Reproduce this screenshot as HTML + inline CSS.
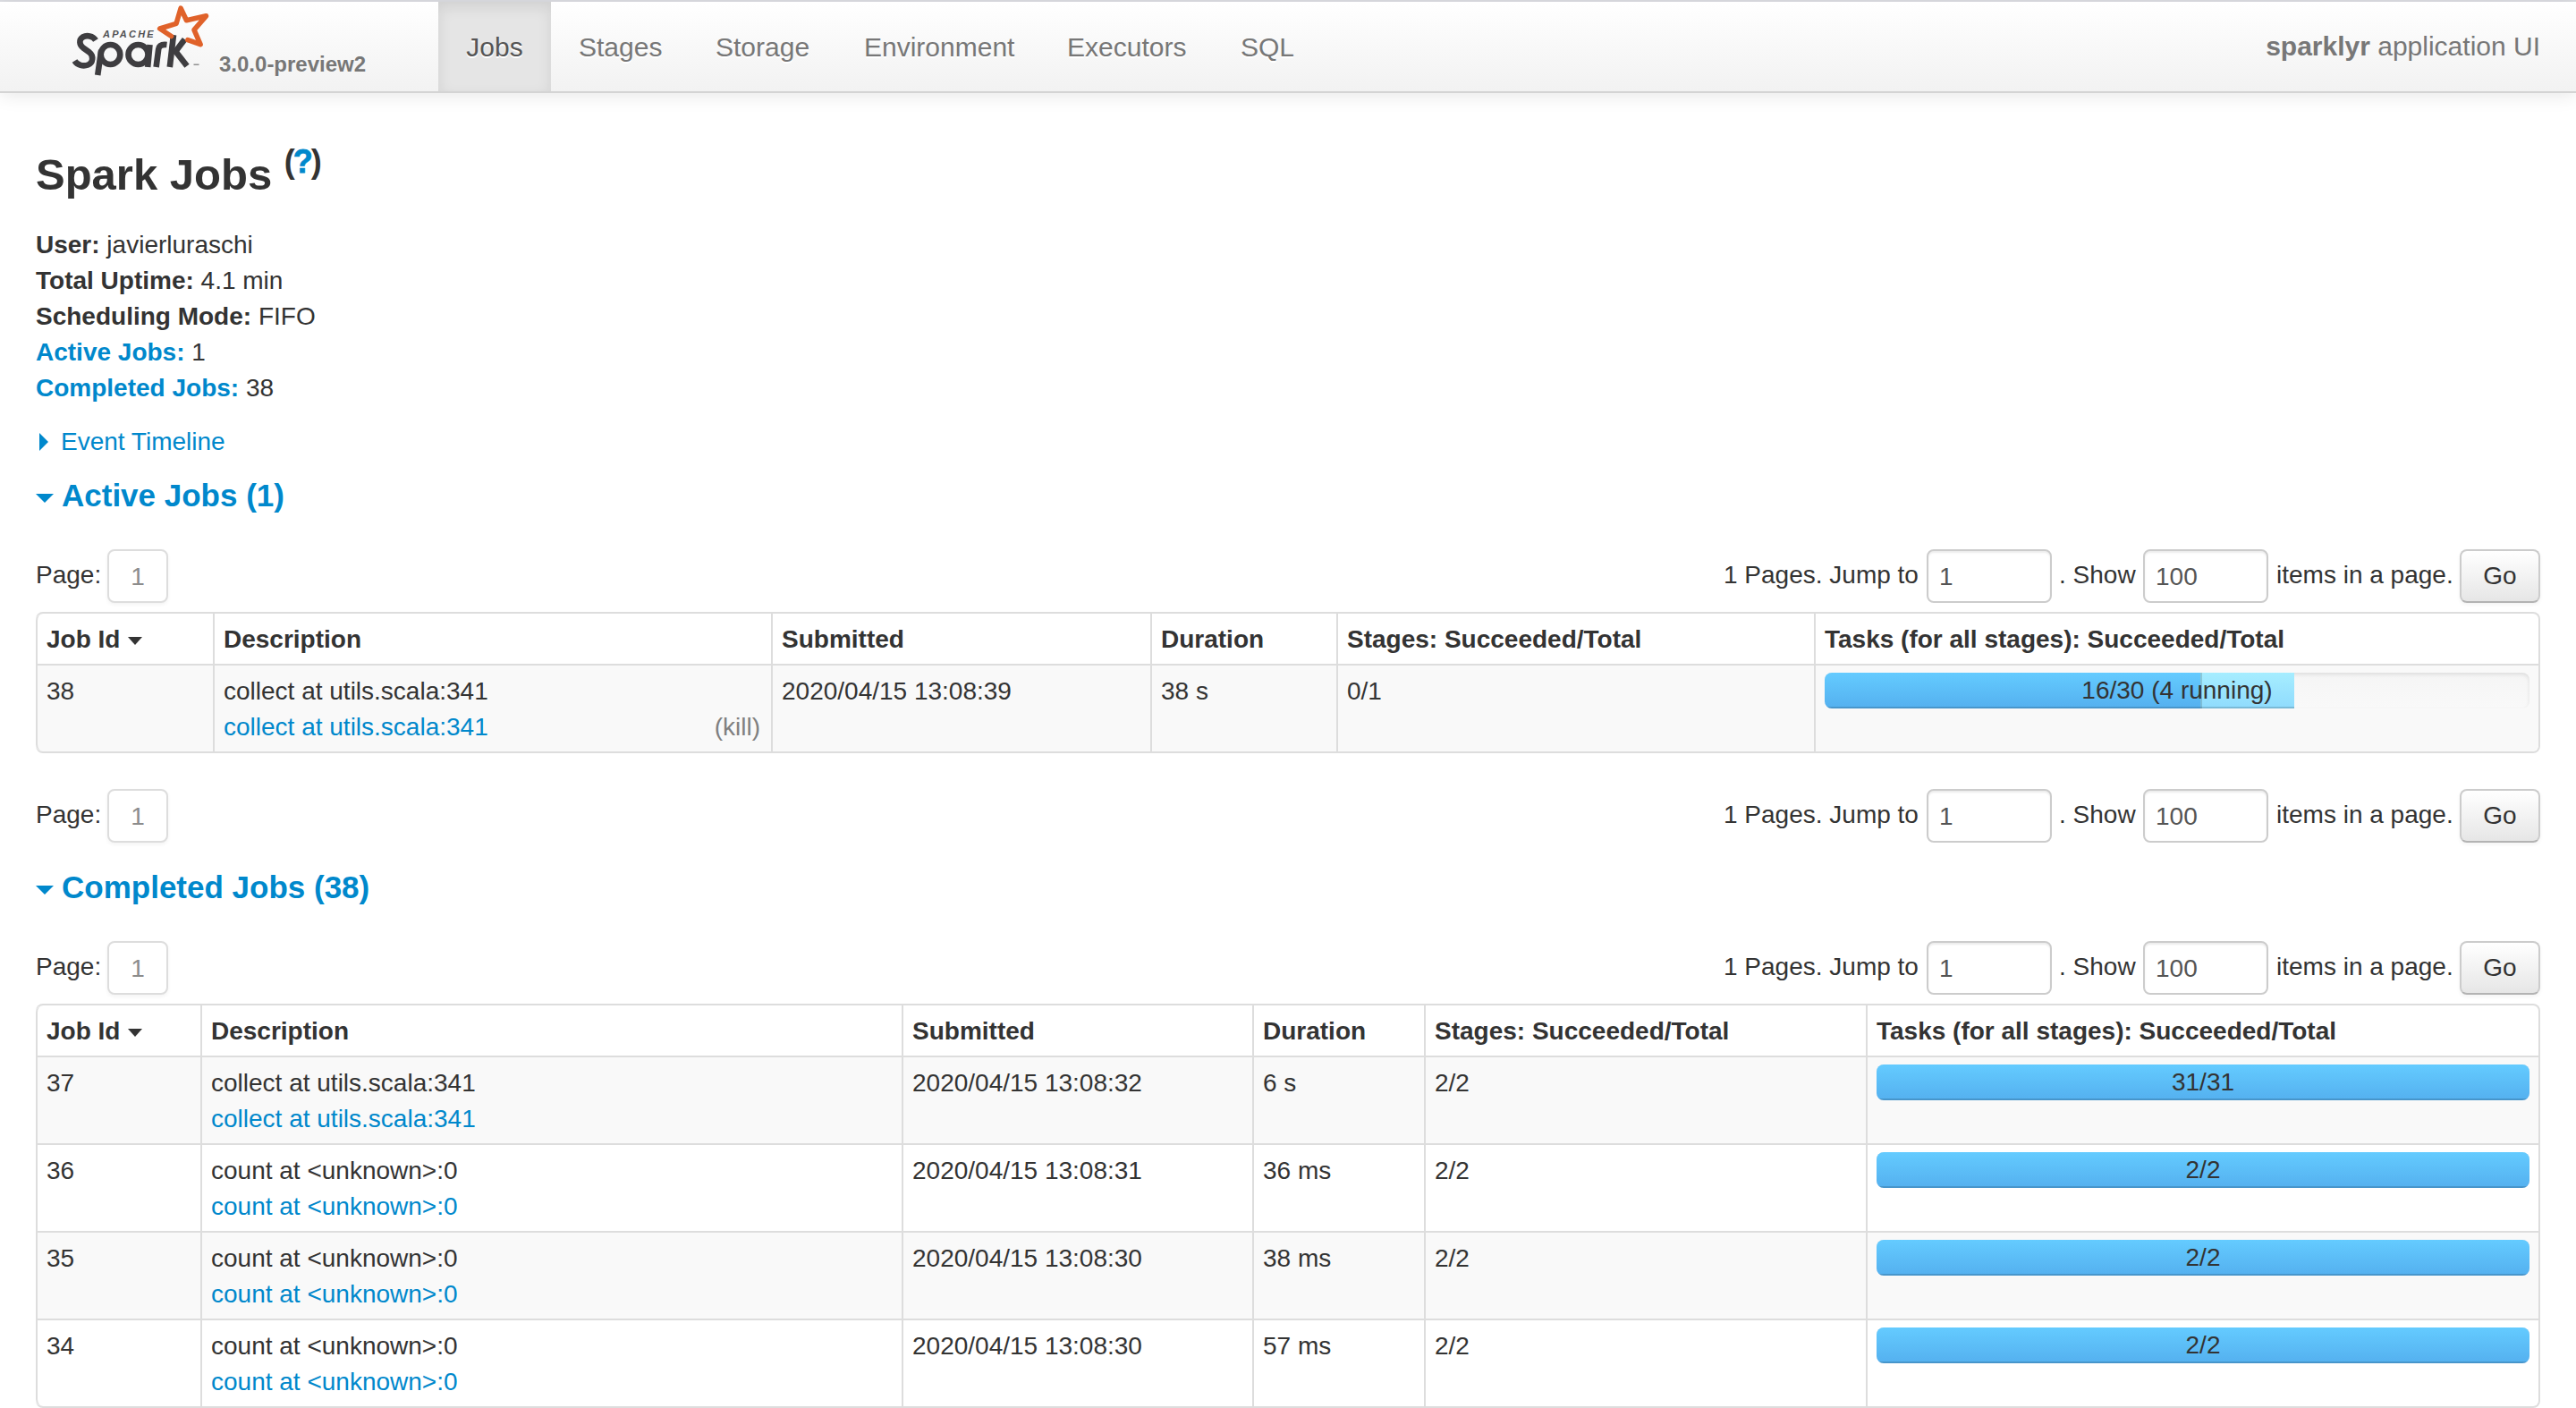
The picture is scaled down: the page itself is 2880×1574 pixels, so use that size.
<!DOCTYPE html>
<html>
<head>
<meta charset="utf-8">
<style>
* { box-sizing: border-box; }
html, body { margin: 0; padding: 0; }
body {
  position: relative;
  width: 2880px; height: 1574px; overflow: hidden;
  background: #fff;
  font-family: "Liberation Sans", sans-serif;
  font-size: 28px; line-height: 40px; color: #333;
}
a { color: #0088cc; text-decoration: none; }
.abs { position: absolute; white-space: nowrap; }
.topline { position: absolute; left: 0; top: 0; width: 2880px; height: 2px; background: #dddee3; }
.navbar {
  position: absolute; left: 0; top: 2px; width: 2880px; height: 102px;
  background: linear-gradient(to bottom, #ffffff, #f2f2f2);
  border-bottom: 2px solid #d4d4d4;
  box-shadow: 0 2px 20px rgba(0,0,0,0.1);
}
.logo { position: absolute; left: 0; top: -2px; }
.version { position: absolute; left: 245px; top: 50px; font-size: 24px; line-height: 40px; font-weight: bold; color: #777; }
.nav a { position: absolute; top: 0; height: 100px; padding: 0 30px; line-height: 101px; color: #777; font-size: 30px; text-shadow: 0 2px 0 #fff; white-space: nowrap; }
.nav a.active { background: #e5e5e5; color: #555; box-shadow: inset 0 6px 16px rgba(0,0,0,0.09); }
.apptext { position: absolute; right: 40px; top: 1px; line-height: 98px; font-size: 30px; color: #777; white-space: nowrap; }

h3 { position: absolute; left: 40px; top: 155px; margin: 0; font-size: 49px; line-height: 80px; font-weight: bold; white-space: nowrap; }
h3 sup { font-size: 36px; line-height: 0; vertical-align: baseline; position: relative; top: -19px; letter-spacing: -2px; }
h3 sup a { -webkit-text-stroke: 0.8px #0088cc; }
.info { position: absolute; left: 40px; top: 254px; }
.info div { height: 40px; white-space: nowrap; }
.info a b { color: #0088cc; }

.arrow-closed { position: absolute; width: 0; height: 0; border-top: 10px solid transparent; border-bottom: 10px solid transparent; border-left: 10px solid #08c; }
.arrow-open { position: absolute; width: 0; height: 0; border-left: 10px solid transparent; border-right: 10px solid transparent; border-top: 10px solid #08c; }
h4 { position: absolute; margin: 0; font-size: 35px; line-height: 40px; font-weight: bold; color: #0088cc; white-space: nowrap; }

.pglabel { position: absolute; left: 40px; }
.pgbox { position: absolute; left: 120px; width: 68px; height: 60px; border: 2px solid #ddd; border-radius: 8px; background: #fff; color: #8c8c8c; text-align: center; line-height: 57px; box-shadow: 0 2px 4px rgba(0,0,0,0.05); }
.form { position: absolute; left: 0; width: 2880px; height: 60px; }
.form .lbl { position: absolute; top: -1px; line-height: 60px; white-space: nowrap; }
.form .inp { position: absolute; top: 0; height: 60px; width: 140px; border: 2px solid #ccc; border-radius: 8px; background: #fff; color: #555; padding: 0 12px; line-height: 58px; box-shadow: inset 0 2px 2px rgba(0,0,0,0.075); }
.form .btn { position: absolute; top: 0; left: 2750px; width: 90px; height: 60px; border: 2px solid #ccc; border-bottom-color: #b3b3b3; border-radius: 8px; background: linear-gradient(to bottom, #ffffff, #e6e6e6); text-align: center; line-height: 56px; color: #333; box-shadow: inset 0 2px 0 rgba(255,255,255,.2), 0 2px 4px rgba(0,0,0,.05); }

table.tbl { position: absolute; left: 40px; width: 2800px; border-collapse: separate; border-spacing: 0; table-layout: fixed; border: 2px solid #ddd; border-left: 0; border-radius: 8px; }
.tbl th, .tbl td { padding: 9px 10px 7px; line-height: 40px; text-align: left; vertical-align: top; border-left: 2px solid #ddd; border-top: 2px solid #ddd; white-space: nowrap; overflow: hidden; }
.tbl thead th { border-top: 0; font-weight: bold; height: 56px; }
.tbl tbody td { height: 98px; }
.tbl tbody tr.odd td { background: #f9f9f9; }
.tbl thead tr th:first-child { border-top-left-radius: 8px; }
.tbl thead tr th:last-child { border-top-right-radius: 8px; }
.tbl tbody tr:last-child td:first-child { border-bottom-left-radius: 8px; }
.tbl tbody tr:last-child td:last-child { border-bottom-right-radius: 8px; }
.caret { display: inline-block; width: 0; height: 0; border-left: 8px solid transparent; border-right: 8px solid transparent; border-top: 9px solid #333; vertical-align: middle; margin-left: 1px; position: relative; top: 0px; }
.kill { float: right; color: gray; margin-right: 2px; }
.progress { position: relative; height: 40px; margin-top: -1px; border-radius: 8px; background: linear-gradient(to bottom, #f5f5f5, #f9f9f9); box-shadow: inset 0 2px 4px rgba(0,0,0,0.1); overflow: hidden; }
.progress span { position: absolute; left: 0; top: 0; width: 100%; text-align: center; line-height: 40px; }
.bar { float: left; height: 40px; box-shadow: inset 0 -2px 0 rgba(0,0,0,0.15); }
.bar-completed { background: linear-gradient(to bottom, #64cbff, #54b0ef); }
.bar-running { background: linear-gradient(to bottom, #a6edff, #8fdbfd); box-shadow: inset 2px 0 0 rgba(0,0,0,0.15), inset 0 -2px 0 rgba(0,0,0,0.15); }
</style>
</head>
<body>
<div class="topline"></div>
<div class="navbar">
  <svg class="logo" width="260" height="100" viewBox="0 0 260 100">
    <g fill="none" stroke="#3e3d40" stroke-width="6.6" stroke-linecap="butt" stroke-linejoin="round">
      <path d="M107,45 C104,40 97,39 92.5,41.5 C88,44.5 88.5,50 93,53.5 L100,58.5 C105,62.5 104,70.5 98.5,72.5 C93,74.5 86.5,73 83.5,68"/>
      <ellipse cx="123.5" cy="61" rx="10.8" ry="11"/>
      <path d="M113.2,56 L109.2,84"/>
      <ellipse cx="154.5" cy="61" rx="11" ry="11"/>
      <path d="M167.5,50 L165.2,75"/>
      <path d="M174.6,75 L177.2,55 C178,50.5 182,49.5 186.5,50"/>
      <path d="M194,39 L189.8,75"/>
      <path d="M206.5,44 L195.5,58.5" /><path d="M196,57 L209,73.8" />
    </g>
    <path d="M216.5,72.2 L222.5,72.2" stroke="#777" stroke-width="1.2"/>
    <text x="115" y="41.8" font-family="Liberation Sans" font-weight="bold" font-style="italic" font-size="11" letter-spacing="2.2" fill="#505052">APACHE</text>
    <path d="M191.5,40.5 L178.7,32 L197.1,26.3 L202.1,9.2 L208.5,22.7 L230.5,17.8 L217,33.4 L224.1,49.7 L209.9,44.7" fill="none" stroke="#e0622a" stroke-width="5.6" stroke-linejoin="round" stroke-linecap="round"/>
  </svg>
  <div class="version">3.0.0-preview2</div>
  <div class="nav">
    <a class="active" style="left:490px;width:126px;padding:0;text-align:center;">Jobs</a>
    <a style="left:617px;">Stages</a>
    <a style="left:770px;">Storage</a>
    <a style="left:936px;">Environment</a>
    <a style="left:1163px;">Executors</a>
    <a style="left:1357px;">SQL</a>
  </div>
  <div class="apptext"><b>sparklyr</b> application UI</div>
</div>

<h3>Spark Jobs <sup>(<a>?</a>)</sup></h3>
<div class="info">
  <div><b>User:</b> javierluraschi</div>
  <div><b>Total Uptime:</b> 4.1 min</div>
  <div><b>Scheduling Mode:</b> FIFO</div>
  <div><a><b>Active Jobs:</b></a> 1</div>
  <div><a><b>Completed Jobs:</b></a> 38</div>
</div>

<span class="arrow-closed" style="left:44px;top:484px;"></span>
<a class="abs" style="left:68px;top:474px;">Event Timeline</a>

<span class="arrow-open" style="left:40px;top:552px;"></span>
<h4 style="left:69px;top:534px;">Active Jobs (1)</h4>

<!-- paging row 1 -->
<div class="abs pglabel" style="top:623px;">Page:</div>
<div class="pgbox" style="top:614px;">1</div>
<div class="form" style="top:614px;">
  <div class="lbl" style="left:1927px;">1 Pages. Jump to</div>
  <div class="inp" style="left:2154px;">1</div>
  <div class="lbl" style="left:2302px;">. Show</div>
  <div class="inp" style="left:2396px;">100</div>
  <div class="lbl" style="left:2545px;">items in a page.</div>
  <div class="btn">Go</div>
</div>

<table class="tbl" style="top:684px;">
  <colgroup><col style="width:198px"><col style="width:624px"><col style="width:424px"><col style="width:208px"><col style="width:534px"><col style="width:810px"></colgroup>
  <thead><tr><th>Job Id <span class="caret"></span></th><th>Description</th><th>Submitted</th><th>Duration</th><th>Stages: Succeeded/Total</th><th>Tasks (for all stages): Succeeded/Total</th></tr></thead>
  <tbody>
    <tr class="odd"><td>38</td><td>collect at utils.scala:341<br><span class="kill">(kill)</span><a>collect at utils.scala:341</a></td><td>2020/04/15 13:08:39</td><td>38 s</td><td>0/1</td>
      <td><div class="progress"><div class="bar bar-completed" style="width:53.333%"></div><div class="bar bar-running" style="width:13.333%"></div><span>16/30 (4 running)</span></div></td></tr>
  </tbody>
</table>

<!-- paging row 2 -->
<div class="abs pglabel" style="top:891px;">Page:</div>
<div class="pgbox" style="top:882px;">1</div>
<div class="form" style="top:882px;">
  <div class="lbl" style="left:1927px;">1 Pages. Jump to</div>
  <div class="inp" style="left:2154px;">1</div>
  <div class="lbl" style="left:2302px;">. Show</div>
  <div class="inp" style="left:2396px;">100</div>
  <div class="lbl" style="left:2545px;">items in a page.</div>
  <div class="btn">Go</div>
</div>

<span class="arrow-open" style="left:40px;top:990px;"></span>
<h4 style="left:69px;top:972px;">Completed Jobs (38)</h4>

<!-- paging row 3 -->
<div class="abs pglabel" style="top:1061px;">Page:</div>
<div class="pgbox" style="top:1052px;">1</div>
<div class="form" style="top:1052px;">
  <div class="lbl" style="left:1927px;">1 Pages. Jump to</div>
  <div class="inp" style="left:2154px;">1</div>
  <div class="lbl" style="left:2302px;">. Show</div>
  <div class="inp" style="left:2396px;">100</div>
  <div class="lbl" style="left:2545px;">items in a page.</div>
  <div class="btn">Go</div>
</div>

<table class="tbl" style="top:1122px;">
  <colgroup><col style="width:184px"><col style="width:784px"><col style="width:392px"><col style="width:192px"><col style="width:494px"><col style="width:752px"></colgroup>
  <thead><tr><th>Job Id <span class="caret"></span></th><th>Description</th><th>Submitted</th><th>Duration</th><th>Stages: Succeeded/Total</th><th>Tasks (for all stages): Succeeded/Total</th></tr></thead>
  <tbody>
    <tr class="odd"><td>37</td><td>collect at utils.scala:341<br><a>collect at utils.scala:341</a></td><td>2020/04/15 13:08:32</td><td>6 s</td><td>2/2</td>
      <td><div class="progress"><div class="bar bar-completed" style="width:100%"></div><span>31/31</span></div></td></tr>
    <tr><td>36</td><td>count at &lt;unknown&gt;:0<br><a>count at &lt;unknown&gt;:0</a></td><td>2020/04/15 13:08:31</td><td>36 ms</td><td>2/2</td>
      <td><div class="progress"><div class="bar bar-completed" style="width:100%"></div><span>2/2</span></div></td></tr>
    <tr class="odd"><td>35</td><td>count at &lt;unknown&gt;:0<br><a>count at &lt;unknown&gt;:0</a></td><td>2020/04/15 13:08:30</td><td>38 ms</td><td>2/2</td>
      <td><div class="progress"><div class="bar bar-completed" style="width:100%"></div><span>2/2</span></div></td></tr>
    <tr><td>34</td><td>count at &lt;unknown&gt;:0<br><a>count at &lt;unknown&gt;:0</a></td><td>2020/04/15 13:08:30</td><td>57 ms</td><td>2/2</td>
      <td><div class="progress"><div class="bar bar-completed" style="width:100%"></div><span>2/2</span></div></td></tr>
  </tbody>
</table>
</body>
</html>
